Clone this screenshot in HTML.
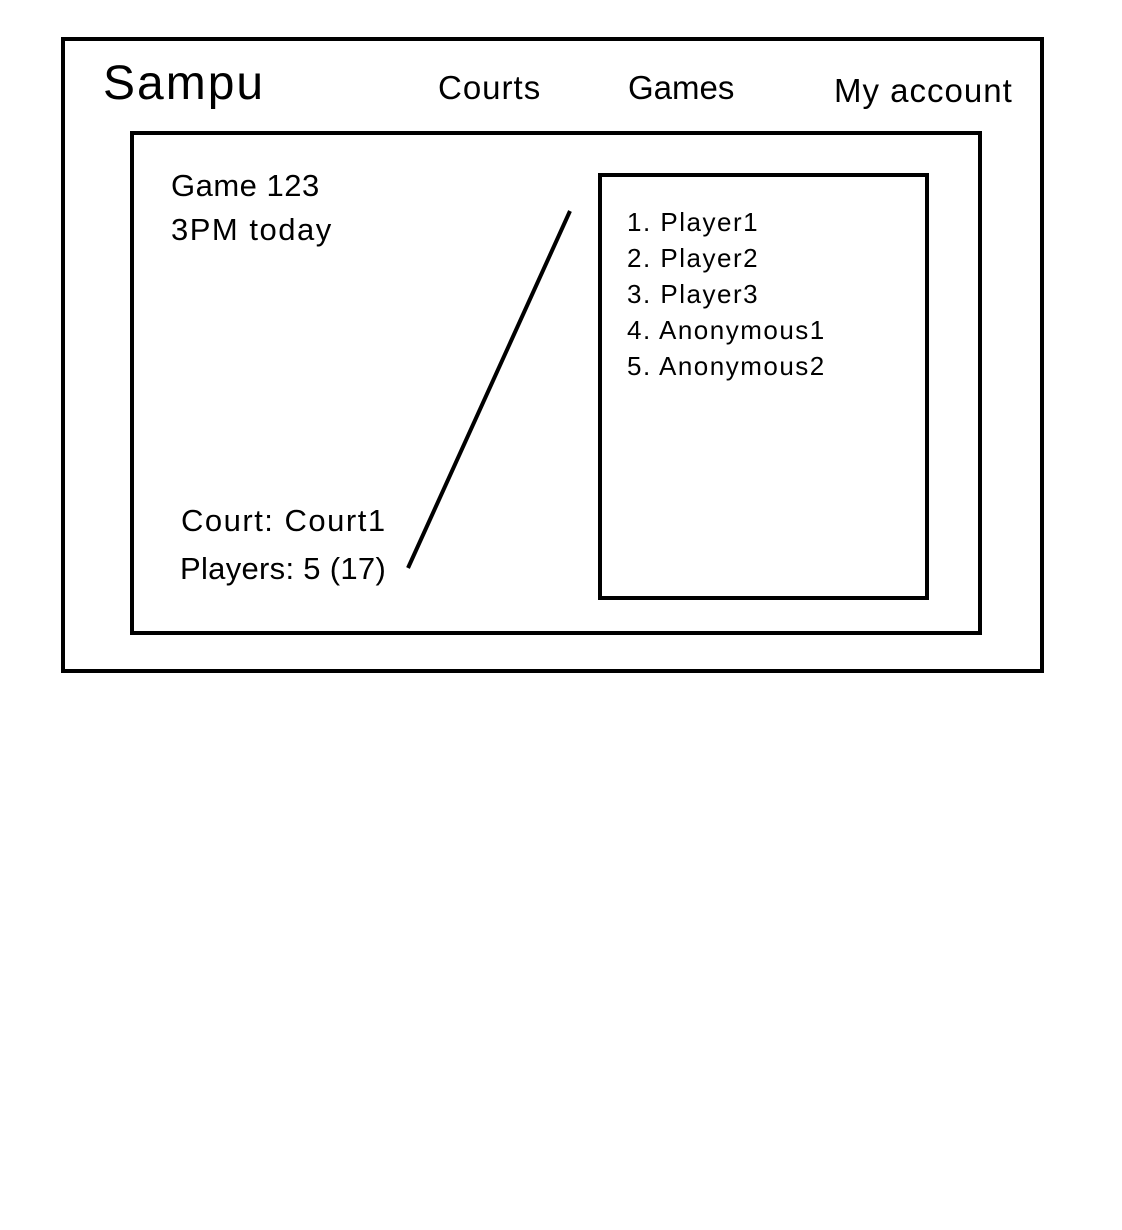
<!DOCTYPE html>
<html><head><meta charset="utf-8"><style>
html,body{margin:0;padding:0;background:#fff;width:1122px;height:1230px;overflow:hidden;position:relative;font-family:"Liberation Sans",sans-serif;color:#000}
.b{position:absolute;border:4px solid #000;box-sizing:border-box}
.t{position:absolute;line-height:1;white-space:nowrap}
</style></head><body>
<div class="b" style="left:61px;top:37px;width:983px;height:636px"></div>
<div class="b" style="left:130px;top:131px;width:852px;height:504px"></div>
<div class="b" style="left:598px;top:173px;width:331px;height:427px"></div>
<svg style="position:absolute;left:0;top:0" width="1122" height="1230"><line x1="570" y1="211" x2="408" y2="568" stroke="#000" stroke-width="4"/></svg>
<div class="t" style="left:103px;top:60px;font-size:48px;letter-spacing:2px">Sampu</div>
<div class="t" style="left:438px;top:71px;font-size:33px;letter-spacing:1px">Courts</div>
<div class="t" style="left:628px;top:71px;font-size:33px">Games</div>
<div class="t" style="left:834px;top:74px;font-size:33px;letter-spacing:1px">My account</div>
<div class="t" style="left:171px;top:170px;font-size:31px;letter-spacing:0.5px">Game 123</div>
<div class="t" style="left:171px;top:214px;font-size:31px;letter-spacing:1.5px">3PM today</div>
<div class="t" style="left:181px;top:505px;font-size:31px;letter-spacing:1.5px">Court: Court1</div>
<div class="t" style="left:180px;top:553px;font-size:31px;letter-spacing:0.3px">Players: 5 (17)</div>
<div class="t" style="left:627px;top:204px;font-size:26px;line-height:36px;letter-spacing:1.5px">1. Player1<br>2. Player2<br>3. Player3<br>4. Anonymous1<br>5. Anonymous2</div>
</body></html>
